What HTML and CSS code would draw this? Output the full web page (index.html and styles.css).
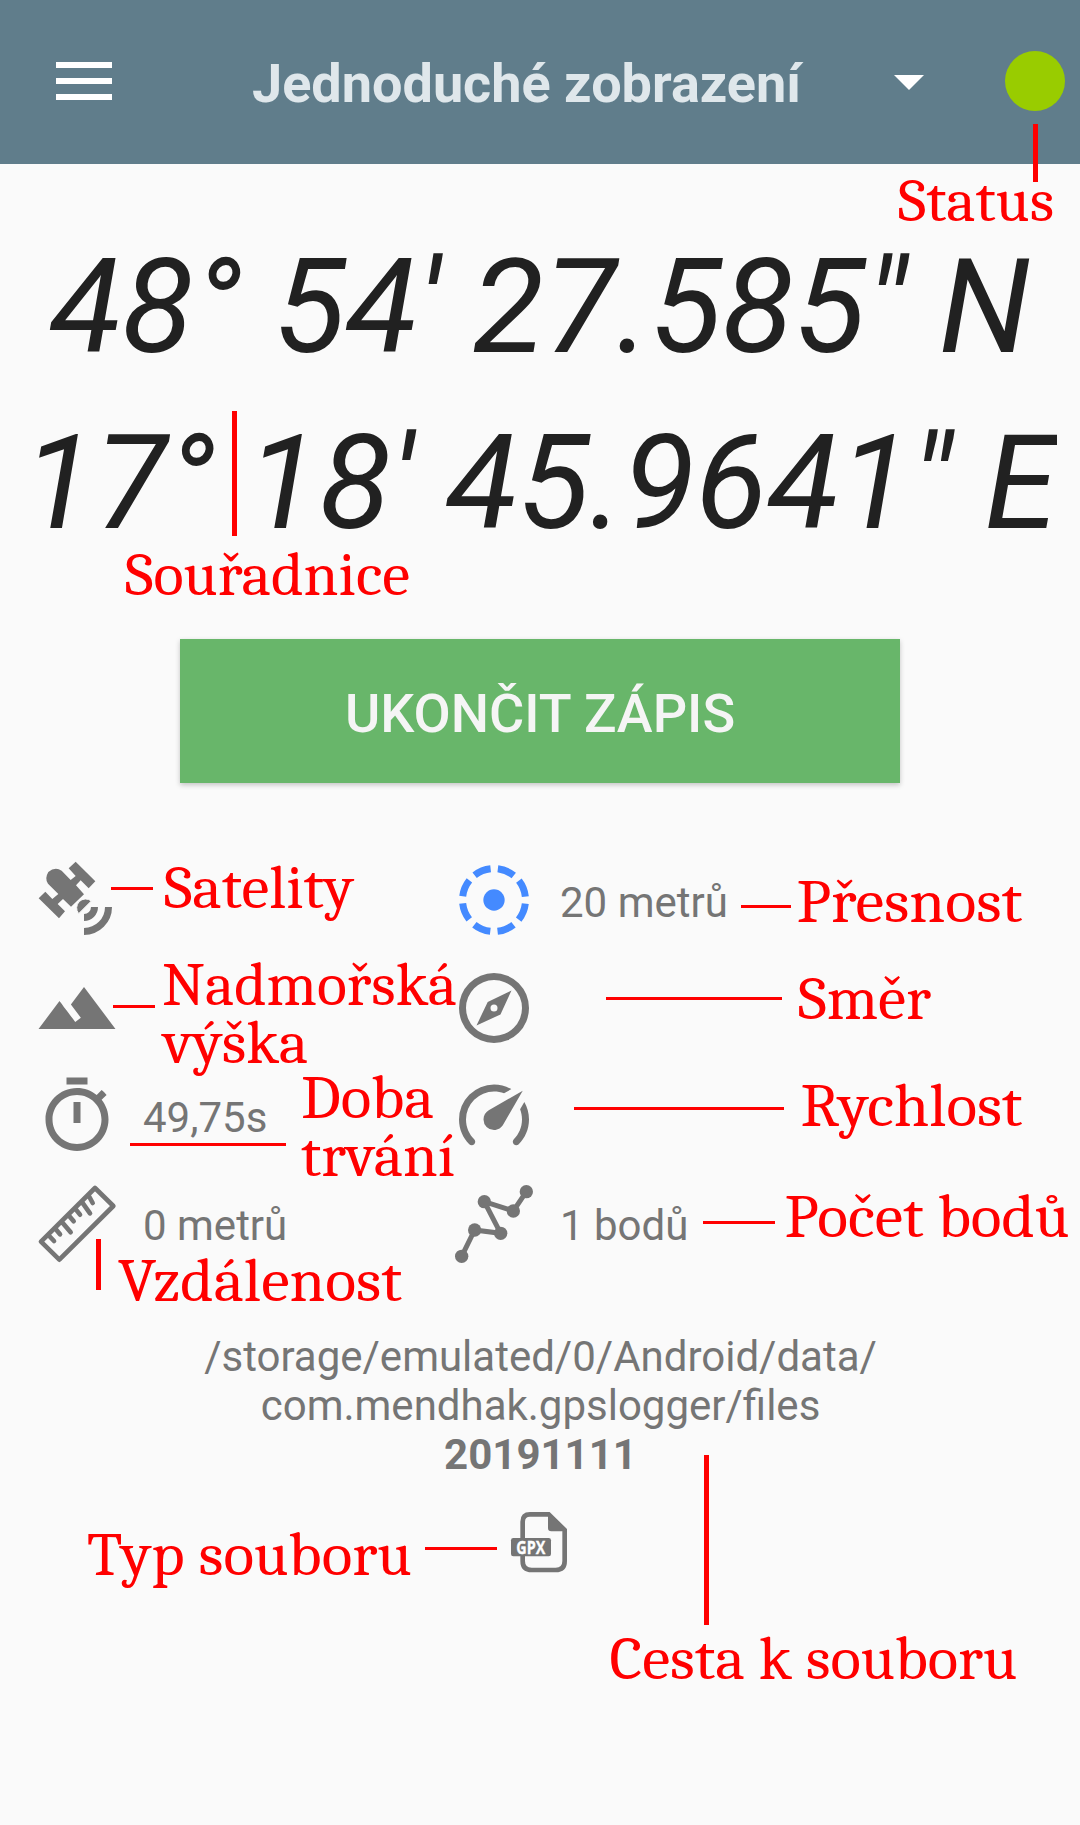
FILE: index.html
```html
<!DOCTYPE html>
<html lang="cs">
<head>
<meta charset="utf-8">
<title>GPSLogger</title>
<link rel="stylesheet" href="styles.css">
</head>
<body>
<div class="screen">
  <header class="toolbar">
    <div class="menu"><span></span><span></span><span></span></div>
    <h1 class="title">Jednoduché zobrazení</h1>
    <svg class="caret" viewBox="0 0 30 15"><path d="M0 0h30L15 15z"/></svg>
    <div class="status"></div>
  </header>

  <main>
    <div class="coords">
      <div class="coord">48° 54' 27.585" N</div>
      <div class="coord">17° 18' 45.9641" E</div>
    </div>

    <button class="stop">UKONČIT ZÁPIS</button>

    <div class="stats">
      <div class="stat">
        <svg class="icon" viewBox="45 54 252 252">
          <path d="M167 65L226 124L206 145L182 121L168 136L192 163L153 200L129 177L113 192L135 214L117 235L56 175L76 155L97 177L115 162L84 131Q73 116 85 96Q105 79 125 92L152 120L167 108L146 85Z"/>
          <path class="dish" d="M176 221A27 27 0 0 1 214 183Z"/>
          <path class="wave" d="M192 232.500A31.500 31.500 0 0 0 223.500 201M192 274.500A73.500 73.500 0 0 0 265.500 201"/>
        </svg>
      </div>
      <div class="stat first">
        <svg class="icon accuracy" viewBox="36 54 252 252">
          <circle class="ring" cx="162" cy="180" r="94.500"/>
          <circle cx="162" cy="180" r="32"/>
        </svg>
        <span>20 metrů</span>
      </div>
      <div class="stat">
        <svg class="icon" viewBox="0 0 24 24"><path d="M14 6l-3.750 5 2.850 3.800-1.600 1.200C9.810 13.750 7 10 7 10l-6 8h22z"/></svg>
      </div>
      <div class="stat">
        <svg class="icon" viewBox="0 0 24 24"><path fill-rule="evenodd" d="M12 2a10 10 0 1 0 0 20a10 10 0 1 0 0-20zM12 4a8 8 0 1 1 0 16a8 8 0 1 1 0-16z"/><path fill-rule="evenodd" d="M17 7l-3.150 6.850L7 17l3.200-6.750zM12 11a1 1 0 1 0 0 2a1 1 0 1 0 0-2z"/></svg>
      </div>
      <div class="stat">
        <svg class="icon" viewBox="0 0 24 24"><path d="M15 1H9v2h6V1zm-4 13h2V8h-2v6zm8.030-6.610l1.420-1.420c-.43-.51-.9-.99-1.410-1.410l-1.420 1.420C16.070 4.740 14.120 4 12 4c-4.970 0-9 4.030-9 9s4.020 9 9 9 9-4.030 9-9c0-2.120-.74-4.070-1.970-5.610zM12 20c-3.870 0-7-3.130-7-7s3.130-7 7-7 7 3.130 7 7-3.130 7-7 7z"/></svg>
        <span>49,75s</span>
      </div>
      <div class="stat">
        <svg class="icon" viewBox="0 0 24 24"><path d="M12 16A3 3 0 0 1 9 13C9 11.880 9.610 10.900 10.500 10.390L20.210 4.770L14.680 14.350C14.180 15.330 13.170 16 12 16M12 3C13.810 3 15.500 3.500 16.970 4.320L14.870 5.530C14 5.190 13 5 12 5A8 8 0 0 0 4 13C4 15.210 4.890 17.210 6.340 18.650H6.350C6.740 19.040 6.740 19.670 6.350 20.060C5.960 20.450 5.320 20.450 4.930 20.070C3.120 18.260 2 15.760 2 13A10 10 0 0 1 12 3M22 13C22 15.760 20.880 18.260 19.070 20.070C18.680 20.450 18.050 20.450 17.660 20.060C17.270 19.670 17.270 19.040 17.660 18.650C19.110 17.200 20 15.210 20 13C20 12 19.810 11 19.460 10.100L20.670 8C21.500 9.500 22 11.180 22 13Z"/></svg>
      </div>
      <div class="stat">
        <svg class="icon line" viewBox="45 396 252 252">
          <path d="M225 414L280 468L118 629L63 575ZM85 555L102 573M105 535L120 553M125 515L152 547M145 495L161 514M165 475L180 494M185 455L210 490M205 435L218 459"/>
        </svg>
        <span>0 metrů</span>
      </div>
      <div class="stat">
        <svg class="icon" viewBox="36 366 252 252">
          <path class="track" d="M65 589L104 510L182 520L133 425L220 453L259 395"/>
          <circle cx="65" cy="589" r="20"/><circle cx="104" cy="510" r="20"/><circle cx="182" cy="520" r="20"/><circle cx="133" cy="425" r="20"/><circle cx="220" cy="453" r="20"/><circle cx="259" cy="395" r="20"/>
        </svg>
        <span>1 bodů</span>
      </div>
    </div>

    <div class="path">/storage/emulated/0/Android/data/<br>com.mendhak.gpslogger/files<br><b>20191111</b></div>

    <svg class="file" viewBox="0 0 300 300">
      <path class="sheet" d="M120 73H176L224 120V213Q224 240 197 240H125Q98 240 98 213V95Q98 73 120 73Z"/>
      <path d="M174 68L231 120V124H184Q174 124 174 114Z"/>
      <rect x="63" y="144" width="120" height="55" rx="7"/>
      <text x="79" y="191" textLength="87" lengthAdjust="spacingAndGlyphs">GPX</text>
    </svg>
  </main>

  <!-- Callout labels and pointer lines drawn over the screen -->
  <svg class="notes" viewBox="0 0 1080 1825">
    <path class="thick" d="M1035.500 124V182M234.500 411V536M98.500 1239V1290M706.500 1455V1625"/>
    <path class="thin" d="M111 888.500H153M113 1006.500H155M130 1144.500H286M741 906.500H791M606 998.500H782M574 1108.500H784M703 1222.500H775M425 1548.500H497"/>
    <text x="898" y="221" textLength="156" lengthAdjust="spacingAndGlyphs">Status</text>
    <text x="125" y="595" textLength="285" lengthAdjust="spacingAndGlyphs">Souřadnice</text>
    <text x="164" y="908" textLength="190" lengthAdjust="spacingAndGlyphs">Satelity</text>
    <text x="162" y="1004.500" textLength="295" lengthAdjust="spacingAndGlyphs">Nadmořská</text>
    <text x="163" y="1062.500" textLength="145" lengthAdjust="spacingAndGlyphs">výška</text>
    <text x="301" y="1117.500" textLength="133" lengthAdjust="spacingAndGlyphs">Doba</text>
    <text x="301" y="1175.500" textLength="154" lengthAdjust="spacingAndGlyphs">trvání</text>
    <text x="118" y="1300.500" textLength="284" lengthAdjust="spacingAndGlyphs">Vzdálenost</text>
    <text x="796.500" y="922" textLength="226" lengthAdjust="spacingAndGlyphs">Přesnost</text>
    <text x="798" y="1018.500" textLength="133" lengthAdjust="spacingAndGlyphs">Směr</text>
    <text x="800.500" y="1125.500" textLength="222" lengthAdjust="spacingAndGlyphs">Rychlost</text>
    <text x="784.500" y="1236.500" textLength="285" lengthAdjust="spacingAndGlyphs">Počet bodů</text>
    <text x="87" y="1575" textLength="325" lengthAdjust="spacingAndGlyphs">Typ souboru</text>
    <text x="609.500" y="1679" textLength="408" lengthAdjust="spacingAndGlyphs">Cesta k souboru</text>
  </svg>
</div>
</body>
</html>
```
FILE: styles.css
```css
* { box-sizing: border-box; }
body { margin: 0; background: #fafafa; font-family: Roboto, "Liberation Sans", sans-serif; }
.screen { position: relative; width: 1080px; height: 1825px; overflow: hidden; }
.toolbar { display: flex; align-items: flex-start; height: 164px; padding-left: 56px; background: #607d8b; }
.menu { display: flex; flex-direction: column; gap: 10px; width: 56px; margin-top: 62px; }
.menu span { height: 6px; background: #fff; }
.title { width: 642px; margin: 52px 0 0 140px; font-size: 54px; line-height: 64px; font-weight: 700; color: #dfe7eb; white-space: nowrap; }
.caret { width: 30px; height: 15px; margin-top: 75px; fill: #fff; }
.status { width: 60px; height: 60px; margin: 51px 0 0 81px; border-radius: 50%; background: #9c0; }
main { display: flex; flex-direction: column; align-items: center; padding-top: 55px; }
.coords { width: 1034px; overflow: hidden; }
.coord { font-size: 132px; line-height: 176px; font-style: italic; color: #212121; text-align: center; white-space: nowrap; }
.stop { width: 720px; height: 144px; margin-top: 68px; padding: 5px 0 0; border: 0; background: #68b66a; box-shadow: 0 2px 5px rgba(0, 0, 0, .22); color: #f5f5f5; font: 500 54px Roboto, sans-serif; }
.stats { display: grid; grid-template-columns: 417px 1fr; grid-auto-rows: 84px; row-gap: 24px; width: 100%; margin-top: 75px; padding-left: 35px; }
.stat { display: flex; align-items: center; gap: 24px; font-size: 42px; color: #757575; white-space: nowrap; }
.stat span { padding-top: 3px; }
.first span { padding-top: 5px; }
.icon { width: 84px; height: 84px; fill: #757575; }
.accuracy { fill: #448aff; }
.ring { fill: none; stroke: #448aff; stroke-width: 21; stroke-dasharray: 52.220 22; stroke-dashoffset: -11; }
.dish { stroke: #fafafa; stroke-width: 3; }
.wave { fill: none; stroke: #757575; stroke-width: 21; }
.line path { fill: none; stroke: #757575; stroke-width: 14; stroke-linejoin: round; stroke-linecap: round; }
.track { fill: none; stroke: #757575; stroke-width: 15; }
.path { margin-top: 66px; padding-left: 1px; font-size: 42px; line-height: 49px; color: #757575; text-align: center; }
.file { width: 100px; height: 100px; margin-top: 11px; fill: #757575; }
.sheet { fill: none; stroke: #757575; stroke-width: 14; }
.file text { fill: #fff; stroke: #fff; stroke-width: 1; font: 700 54px "Open Sans", sans-serif; }
.notes { position: absolute; left: 0; top: 0; width: 1080px; height: 1825px; fill: red; font: 60px Cambria, Caladea, "Liberation Serif", serif; }
.thick { stroke: red; stroke-width: 5; }
.thin { stroke: red; stroke-width: 3; }
```
